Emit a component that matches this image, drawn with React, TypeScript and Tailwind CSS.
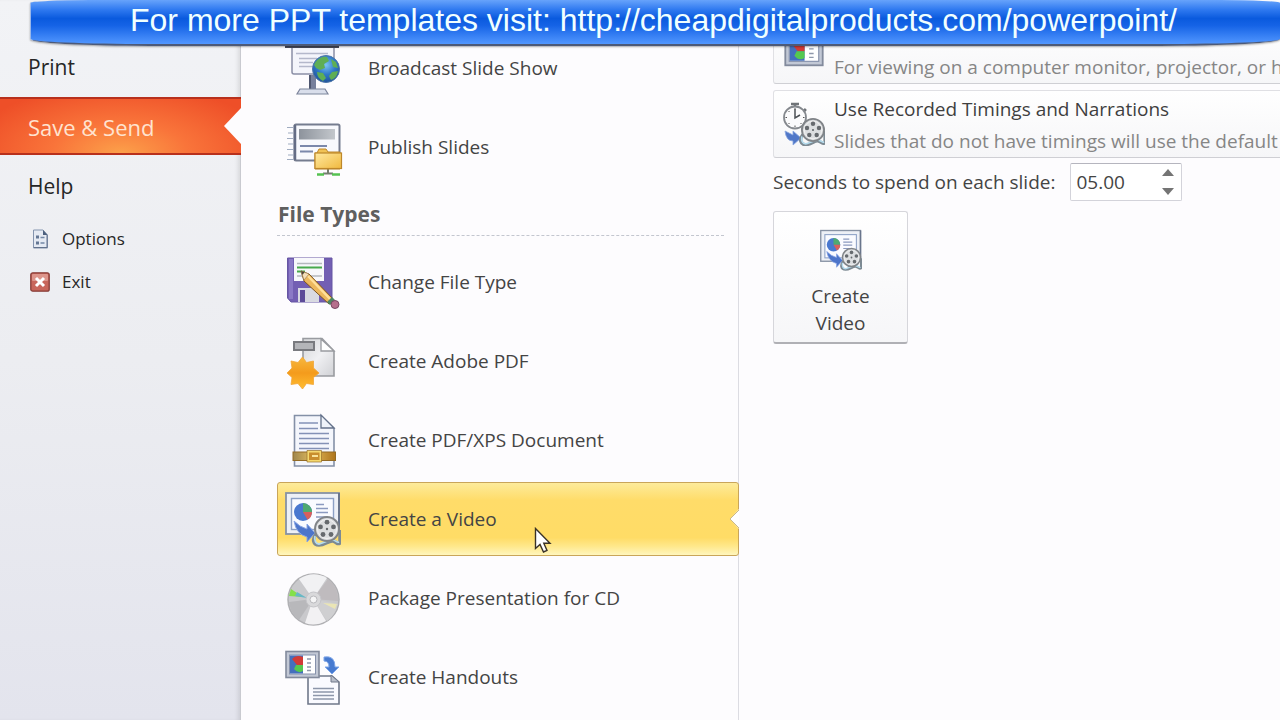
import { useState } from "react";
import type { ReactNode } from "react";

function Pie({ cx, cy, r }: { cx: number; cy: number; r: number }) {
  return (
    <g transform={`translate(${cx} ${cy}) scale(${r})`}>
      <circle r="1" fill="#4a78cf" />
      <path d="M0 0V-1A1 1 0 0 1 1 0Z" fill="#4faa70" />
      <path d="M0 0H1A1 1 0 0 1 .5 .86Z" fill="#d9605c" />
    </g>
  );
}

function Reel({ cx, cy, r }: { cx: number; cy: number; r: number }) {
  return (
    <g transform={`translate(${cx} ${cy}) scale(${r / 13})`}>
      <path d="M-11 5C-15 10-14 16-8 16S2 11 6 12s4 4 7 2V1" fill="none" stroke="#7d8a93" strokeWidth="3.5" />
      <path d="M-12 7C-13 12-11 15-8 15S2 10 6 11s4 3 6 2" fill="none" stroke="#b5dcee" strokeWidth="1.8" />
      <circle r="12" fill="#dcdee0" stroke="#808488" strokeWidth="2" />
      <circle r="9.5" fill="none" stroke="#f2f2f2" strokeWidth="1" />
      <g fill="#666a6e">
        <circle cx="0" cy="-6.8" r="2.4" />
        <circle cx="6.5" cy="-2.1" r="2.4" />
        <circle cx="4" cy="5.5" r="2.4" />
        <circle cx="-4" cy="5.5" r="2.4" />
        <circle cx="-6.5" cy="-2.1" r="2.4" />
        <circle r="1.2" />
      </g>
    </g>
  );
}

function BroadcastIcon() {
  return (
    <svg viewBox="0 0 56 56" className="size-14 shrink-0" aria-hidden="true">
      <path d="M7 7H49V32Q49 34 47 34H9Q7 34 7 32Z" fill="#f4f5fb" stroke="#8b8fa6" strokeWidth="1.5" />
      <path d="M0 4.500H54V8H0Z" fill="#474a5c" />
      <path d="M11 13.500H43M14 18.500H32M14 22.500H28M14 26.500H28" stroke="#b4b8cb" strokeWidth="1.4" />
      <path d="M24 35H31V50H24Z" fill="#77809c" />
      <path d="M24 35H26V50H24Z" fill="#4e566f" />
      <path d="M15 49H40L43 54H12Z" fill="#d9deeb" stroke="#7d859c" strokeWidth="1.2" />
      <circle cx="41" cy="29" r="13.500" fill="url(#globe)" stroke="#4c76a8" />
      <path d="M29 25C32 18 38 16 42 17L44 21 39 24 40 28 35 30 31 28ZM46 19L51 22 53 28 48 27ZM32 32L38 33 41 38 38 41C34 39 32 36 32 32ZM47 32L53 31C52 37 49 39 46 40L44 36Z" fill="#5fae55" />
      <defs>
        <radialGradient id="globe" cx=".5" cy=".35" r=".7">
          <stop stopColor="#7cc5f4" />
          <stop offset=".5" stopColor="#2f79c9" />
          <stop offset="1" stopColor="#1d4c92" />
        </radialGradient>
      </defs>
    </svg>
  );
}

function PublishIcon() {
  return (
    <svg viewBox="0 0 56 56" className="size-14 shrink-0 overflow-visible" aria-hidden="true">
      <path d="M2 8.500H8M3 14H8M2 19.500H8M3 25H8M2 30.500H8M3 36H8M2 40.500H8" stroke="#9fabc0" strokeWidth="1.2" />
      <rect x="9.500" y="5.500" width="45" height="36" rx="1.500" fill="#f8f9fd" stroke="#757c8f" strokeWidth="2" />
      <path d="M10 6V41" stroke="#656d85" strokeWidth="2.500" />
      <rect x="14" y="10" width="36" height="10.500" fill="url(#bar)" />
      <path d="M15 27H42M15 32.500H28" stroke="#7b88ab" strokeWidth="2" />
      <path d="M43 50V55M38 54.500H48" stroke="#747d70" strokeWidth="2" />
      <path d="M32 55.500H39M47 55.500H55" stroke="#55c252" strokeWidth="2.500" />
      <path d="M32 34L34 30H41L43 33H55V50H30V34Z" fill="#f0c255" stroke="#bd872a" />
      <rect x="30" y="34" width="26.500" height="15.500" fill="url(#folder)" stroke="#bd872a" strokeWidth="1.200" />
      <defs>
        <linearGradient id="bar"><stop stopColor="#8d939c" /><stop offset="1" stopColor="#c3c7cc" /></linearGradient>
        <linearGradient id="folder" x2="1" y2="1"><stop stopColor="#ffe9a0" /><stop offset="1" stopColor="#f0b93f" /></linearGradient>
      </defs>
    </svg>
  );
}

function FloppyIcon() {
  return (
    <svg viewBox="0 0 56 56" className="size-14 shrink-0 overflow-visible" aria-hidden="true">
      <path d="M2.500 4H47V48H6L2.500 44Z" fill="#735fb3" stroke="#6656a3" />
      <path d="M4 5H8V45H4Z" fill="#8b79c6" />
      <rect x="9" y="4" width="30" height="23" fill="#f8f8fb" />
      <path d="M12 9.500H37M12 22H20M25 22H37" stroke="#b5b8be" strokeWidth="1.500" />
      <path d="M12 13.500H37M12 17.500H20" stroke="#48a94d" strokeWidth="2" />
      <path d="M13 34H34V48H13Z" fill="#d9dae2" />
      <path d="M15 36H20V48H15Z" fill="#5d4b99" />
      <path d="M16 17L24 20 49 46 44 50 19 27Z" fill="#edb85d" stroke="#80551f" />
      <path d="M23 22L46 46" stroke="#ffdf99" strokeWidth="2.500" />
      <path d="M16 17L24 20 19 26Z" fill="#f4dfb9" stroke="#9b7b4c" strokeWidth=".6" />
      <path d="M16 17L19.500 18.300 17.500 21Z" fill="#4b4339" />
      <path d="M42 48L47 43 50 46 45 51Z" fill="#4f8763" />
      <circle cx="50" cy="50.500" r="4" fill="#b66f8c" stroke="#784762" />
    </svg>
  );
}

function AdobeIcon() {
  return (
    <svg viewBox="0 0 56 56" className="size-14 shrink-0 overflow-visible" aria-hidden="true">
      <path d="M18 5.500H37L49 18V43H18Z" fill="url(#paper)" stroke="#999ba0" strokeWidth="1.600" />
      <path d="M36 6V18H49Z" fill="#fff" stroke="#999ba0" strokeWidth="1.300" />
      <rect x="9" y="9" width="20" height="8" fill="#b4b5b9" stroke="#797a7f" strokeWidth="2" />
      <path d="M17.500 24L21.500 29.500 28.500 28 28.500 35 34 40 28.500 44.500 28.500 51.500 21.500 50.500 17.500 56 13 50.500 6 51.500 7 44.500 2 40 7 35 6 28 13 29.500Z" fill="url(#sun)" stroke="#f1a638" strokeWidth=".8" />
      <defs>
        <linearGradient id="paper" x2="1" y2="1"><stop stopColor="#d5d6d9" /><stop offset=".5" stopColor="#f0f0f3" /><stop offset="1" stopColor="#d0d1d5" /></linearGradient>
        <linearGradient id="sun" x2="0" y2="1"><stop stopColor="#f6b83f" /><stop offset=".5" stopColor="#f49b1c" /><stop offset="1" stopColor="#ffbd31" /></linearGradient>
      </defs>
    </svg>
  );
}

function XpsIcon() {
  return (
    <svg viewBox="0 0 56 56" className="size-14 shrink-0" aria-hidden="true">
      <path d="M9.500 3.500H36L49 16V54H9.500Z" fill="#f4f6fc" stroke="#8490a7" strokeWidth="1.600" />
      <path d="M36 3V16H49Z" fill="#eef2f9" stroke="#64718a" strokeWidth="1.300" />
      <path d="M14 11H33M14 16.500H33M14 21.500H44M14 26.500H44M14 31.500H44M14 36.500H44" stroke="#8391b6" strokeWidth="1.500" />
      <rect x="8" y="40" width="42.500" height="8.500" fill="url(#belt)" stroke="#936b25" />
      <rect x="23" y="39.500" width="12.500" height="9.500" fill="#c98e2d" stroke="#f5d86e" strokeWidth="2" />
      <path d="M27 44H33" stroke="#f8e39a" strokeWidth="2" />
      <path d="M22 38.500H36.500V50H22Z" fill="none" stroke="#96702b" strokeWidth=".7" />
      <defs>
        <linearGradient id="belt"><stop stopColor="#9e864e" /><stop offset=".45" stopColor="#e1ba5c" /><stop offset="1" stopColor="#ae741b" /></linearGradient>
      </defs>
    </svg>
  );
}

function VideoIcon({ className }: { className: string }) {
  return (
    <svg viewBox="0 0 56 56" className={className} aria-hidden="true">
      <rect x="1" y="2" width="53" height="41" fill="#edf0f6" stroke="#8792a4" strokeWidth="1.800" />
      <path d="M54 2V43" stroke="#69758c" strokeWidth="2" />
      <rect x="6.500" y="7.500" width="42" height="31" fill="#fafbff" stroke="#8ca0c5" strokeWidth="1.400" />
      <Pie cx={18} cy={21} r={9} />
      <path d="M31 13.500H39M31 17.500H43M31 21.500H43M31 26H43" stroke="#8b9ac0" strokeWidth="1.500" />
      <path d="M9 30L15 35 22 38V33L30 42 22 51V46Q11 43 9 30Z" fill="#4d75ca" stroke="#89a6e5" />
      <Reel cx={42} cy={38} r={13} />
    </svg>
  );
}

function DiscIcon() {
  return (
    <svg viewBox="0 0 56 56" className="size-14 shrink-0" aria-hidden="true">
      <circle cx="28.500" cy="29.500" r="25.500" fill="#c9c9cc" stroke="#b0b0b3" strokeWidth="1.500" />
      <path d="M28 29L14 9Q28 0 42 8Z" fill="#f1f1f3" />
      <path d="M28 29L43 9Q54 18 53 31Z" fill="#bfbbbe" />
      <path d="M28 29L53 34Q50 46 42 51Z" fill="#cfcfd1" />
      <path d="M28 29L41 51Q30 57 20 53Z" fill="#f2f1f3" />
      <path d="M28 29L14 50Q5 43 4 32Z" fill="#b8b8bb" />
      <path d="M18 27L4 26 6 19Z" fill="#84e04a" />
      <path d="M22 28L10 26 12 22Z" fill="#68b8c6" />
      <path d="M38 33L52 34 50 39Z" fill="#eae5b5" />
      <circle cx="28.500" cy="29.500" r="7.500" fill="#d9d9db" stroke="#c4c4c8" />
      <circle cx="28.500" cy="29.500" r="3.500" fill="#f5f5f6" stroke="#b9b9bd" />
    </svg>
  );
}

function SlideFrame() {
  return (
    <g>
      <rect x="1" y="2.500" width="33" height="26" fill="#c2c8d5" stroke="#828a9c" strokeWidth="1.600" />
      <rect x="4.500" y="6" width="26" height="19" fill="#fff" stroke="#8691ab" />
      <path d="M5 6.500H18V24.500H5Z" fill="#446fbd" />
      <path d="M12 16L7 10Q11 5 18 8V16Z" fill="#d23b36" />
      <path d="M11 16H18V22Q13 25 9 20Z" fill="#55c850" />
      <path d="M22 10H26M22 14H26M22 18H26M22 21.500H26" stroke="#8f98aa" strokeWidth="1.300" />
    </g>
  );
}

function HandoutIcon() {
  return (
    <svg viewBox="0 0 56 56" className="size-14 shrink-0" aria-hidden="true">
      <path d="M23 27H47L54 33V55H23Z" fill="#fafaff" stroke="#70788a" strokeWidth="1.600" />
      <path d="M46 26V33H54Z" fill="#b8bdc9" stroke="#70788a" />
      <path d="M28 39.500H49M28 43H49M28 46.500H49M28 50H49" stroke="#8d96aa" strokeWidth="1.500" />
      <SlideFrame />
      <path d="M39 8Q50 6 50 18H54L47 25 40 18H44Q44 12 39 12Z" fill="#477ad0" stroke="#7fa6e8" />
    </svg>
  );
}

function MonitorIcon() {
  return (
    <svg viewBox="0 0 35 30" className="h-[34px] w-[42px] shrink-0" aria-hidden="true">
      <SlideFrame />
    </svg>
  );
}

function TimingIcon() {
  return (
    <svg viewBox="0 0 42 44" className="h-11 w-[42px] shrink-0" aria-hidden="true">
      <path d="M8 2H16M12 2V6M21 7L23 9" stroke="#707478" strokeWidth="2.500" />
      <circle cx="12" cy="15.500" r="11" fill="#fbfbfc" stroke="#85898e" strokeWidth="1.800" />
      <path d="M12 7V16L17 13" fill="none" stroke="#4d5256" strokeWidth="1.500" />
      <path d="M12 6V7.500M12 23.500V25M2.500 15.500H4M20 15.500H21.500M5.500 9L6.500 10M5.500 22L6.500 21M18.500 22L17.500 21" stroke="#555" />
      <path d="M2 29L10 33V29L18 36 10 43V39Q3 39 2 29Z" fill="#5178c8" stroke="#89a6df" strokeWidth=".8" />
      <Reel cx={30} cy={28} r={12} />
    </svg>
  );
}

const fileTypes: { label: string; icon: ReactNode }[] = [
  { label: "Change File Type", icon: <FloppyIcon /> },
  { label: "Create Adobe PDF", icon: <AdobeIcon /> },
  { label: "Create PDF/XPS Document", icon: <XpsIcon /> },
  { label: "Create a Video", icon: <VideoIcon className="size-14 shrink-0" /> },
  { label: "Package Presentation for CD", icon: <DiscIcon /> },
  { label: "Create Handouts", icon: <HandoutIcon /> },
];

function MenuRow({ label, icon, active, onClick }: { label: string; icon: ReactNode; active?: boolean; onClick?: () => void }) {
  return (
    <button
      onClick={onClick}
      className={
        "relative -mr-px flex h-[74px] items-center gap-[27px] rounded-[3px] border pl-[7px] text-left text-[19px] text-[#444] " +
        (active
          ? "border-[#c9a55a] bg-[linear-gradient(#fdeb9b_0%,#ffdc69_24%,#ffdc66_76%,#ffe88c_88%,#fff6bd_100%)]"
          : "border-transparent")
      }
    >
      {icon}
      <span>{label}</span>
      {active && (
        <svg viewBox="0 0 10 20" className="absolute top-[26px] -right-px h-5 w-[10px]" aria-hidden="true">
          <path d="M10 0L1 10 10 20Z" fill="#fff" />
          <path d="M10 1L1 10 10 19" fill="none" stroke="#c9b98a" />
        </svg>
      )}
    </button>
  );
}

function OptionCard({ icon, title, text }: { icon: ReactNode; title: string; text: string }) {
  return (
    <button className="-mr-2 flex h-[68px] items-center gap-[9px] overflow-hidden rounded-[3px] border border-[#e0e0e4] border-b-[#cfcfd4] bg-linear-to-b from-white to-[#f6f6f8] pl-[9px] text-left whitespace-nowrap">
      {icon}
      <span className="flex flex-col gap-1 pt-0.5">
        <span className="text-[19px] leading-7 text-[#3f3f3f]">{title}</span>
        <span className="text-[19px] leading-7 text-[#868686]">{text}</span>
      </span>
    </button>
  );
}

export default function App() {
  const [selected, setSelected] = useState("Create a Video");
  const [seconds, setSeconds] = useState(5);

  return (
    <div className="relative flex h-screen overflow-hidden bg-[#fdfcfe] font-['Open_Sans','Noto_Sans',sans-serif]">
      {/* Banner */}
      <header className="absolute top-0 right-0 left-[30px] z-10 flex h-[46px] items-center justify-center rounded-t-[60px_3px] rounded-b-[120px_7px] border-b-2 border-l border-b-[#4d5a78] border-l-[#9ab8ea] bg-[linear-gradient(#67a3fb_0%,#2f79f0_22%,#0a5ade_42%,#1563e6_58%,#5297ff_100%)] pb-1 font-['Liberation_Sans',Arial,sans-serif] text-[32px] whitespace-nowrap text-[#f0ffff] shadow-[0_1px_2px_#0005]">
        <p className="pr-1">
          For more PPT templates visit: <a href="http://cheapdigitalproducts.com/powerpoint/">http://cheapdigitalproducts.com/powerpoint/</a>
        </p>
      </header>

      {/* Sidebar */}
      <nav className="flex w-[241px] shrink-0 flex-col border-r border-[#c9cad0] bg-linear-to-b from-[#f2f3f6] via-[#ecedf1] to-[#e3e4ed] pt-[37px] text-[21px] text-[#262626] shadow-[inset_-4px_0_4px_-2px_#0000001a]">
        <button className="h-[60px] pt-0.5 pl-7 text-left">Print</button>
        <button className="relative -mr-px h-[58px] border-y-2 border-[#b8301c] bg-[radial-gradient(ellipse_at_50%_100%,#fca04a_0%,#f9743a_40%,#ee4f28_90%)] pt-0.5 pl-7 text-left text-[22px] text-[#ffe3cf]">
          Save &amp; Send
          <svg viewBox="0 0 17 36" className="absolute top-[9px] right-0 h-9 w-[17px]" aria-hidden="true">
            <path d="M17 0L0 18 17 36Z" fill="#fdfcfe" />
          </svg>
        </button>
        <button className="h-[62px] pt-0.5 pl-7 text-left">Help</button>
        <button className="flex h-[43px] items-center gap-3 pl-[30px] text-[17px]">
          <svg viewBox="0 0 20 20" className="size-5" aria-hidden="true">
            <path d="M3.500 1H13L17.500 6V19H3.500Z" fill="#e5eaf3" stroke="#8494ae" />
            <path d="M13 1V6H17.500Z" fill="#4c607e" />
            <path d="M6 6.500H9V9.500H6ZM6 12.500H9V15.500H6Z" fill="#647794" />
            <path d="M10.500 8.500H14.500M10.500 14H14.500" stroke="#7388a6" strokeWidth="1.300" />
            <path d="M17 6V18.500H4" fill="none" stroke="#63738d" />
          </svg>
          Options
        </button>
        <button className="flex h-[43px] items-center gap-3 pl-[30px] text-[17px]">
          <svg viewBox="0 0 20 20" className="size-5" aria-hidden="true">
            <rect x=".8" y=".8" width="18.400" height="18.400" rx="2" fill="#c8665b" stroke="#873c37" strokeWidth="1.300" />
            <rect x="2" y="2" width="16" height="7" rx="1" fill="#dd958b" />
            <path d="M6 6L14 14M14 6L6 14" stroke="#fff" strokeWidth="3" />
          </svg>
          Exit
        </button>
      </nav>

      {/* Save & Send list */}
      <section className="flex w-[498px] shrink-0 flex-col gap-[5px] border-r border-[#dcdce2] pt-[31px] pl-[36px]">
        <MenuRow label="Broadcast Slide Show" icon={<BroadcastIcon />} />
        <MenuRow label="Publish Slides" icon={<PublishIcon />} />
        <h2 className="mr-[14px] mb-1 flex h-[47px] items-center border-b border-dashed border-[#c3c6cf] pt-1.5 pl-px text-[21px] font-bold text-[#5f5f5f]">
          File Types
        </h2>
        {fileTypes.map((t) => (
          <MenuRow key={t.label} label={t.label} icon={t.icon} active={selected === t.label} onClick={() => setSelected(t.label)} />
        ))}
      </section>

      {/* Video options */}
      <section className="flex min-w-0 flex-1 flex-col pt-[16px] pl-[34px]">
        <div className="flex flex-col gap-[6px]">
          <OptionCard icon={<MonitorIcon />} title="Computer & HD Displays" text="For viewing on a computer monitor, projector, or high definition display" />
          <OptionCard icon={<TimingIcon />} title="Use Recorded Timings and Narrations" text="Slides that do not have timings will use the default duration" />
        </div>

        <div className="mt-[5px] flex items-center gap-[15px] text-[19px] text-[#444]">
          <label htmlFor="seconds">Seconds to spend on each slide:</label>
          <div className="flex h-[38px] w-28 items-center rounded-[2px] border border-[#d3d3da] border-t-[#b5b5be] bg-white">
            <input
              id="seconds"
              value={"0" + seconds + ".00"}
              readOnly
              className="min-w-0 flex-1 bg-transparent pl-[5px] outline-none"
            />
            <div className="flex w-[26px] flex-col items-center gap-3">
              <button aria-label="More seconds" onClick={() => setSeconds(Math.min(9, seconds + 1))}>
                <svg viewBox="0 0 12 7" className="h-[7px] w-3"><path d="M6 0L12 7H0Z" fill="#747474" /></svg>
              </button>
              <button aria-label="Fewer seconds" onClick={() => setSeconds(Math.max(1, seconds - 1))}>
                <svg viewBox="0 0 12 7" className="h-[7px] w-3"><path d="M0 0H12L6 7Z" fill="#747474" /></svg>
              </button>
            </div>
          </div>
        </div>

        <button className="mt-[10px] flex h-[133px] w-[135px] flex-col items-center rounded-[3px] border border-[#d6d6db] border-b-2 border-b-[#b0b0b5] bg-linear-to-b from-white to-[#f6f6f8] pt-[17px] text-[19px] leading-[27px] text-[#444]">
          <VideoIcon className="mb-3 size-[42px]" />
          <span>Create</span>
          <span>Video</span>
        </button>
      </section>

      {/* Mouse pointer */}
      <svg viewBox="0 0 18 27" className="absolute top-[527px] left-[534px] h-[27px] w-[18px]" aria-hidden="true">
        <path d="M1.500 1.500V21.500L6 17.500 9.500 25 13 23.500 9.800 16.300H16Z" fill="#fff" stroke="#3a3226" strokeWidth="1.400" />
      </svg>
    </div>
  );
}
